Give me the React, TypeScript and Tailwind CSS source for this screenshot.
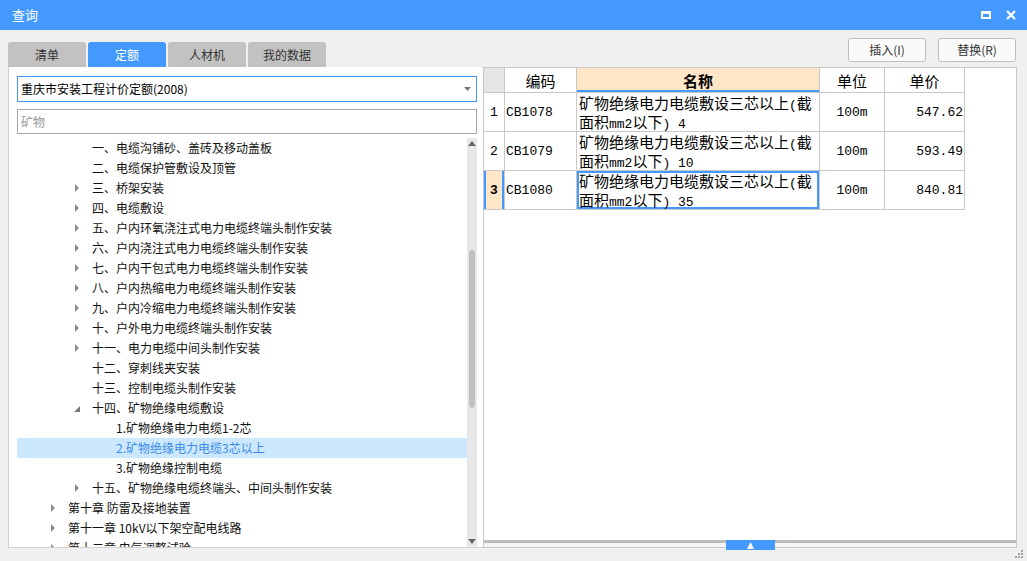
import React from "react";

type Node = { t: string; lv: 1 | 2 | 3; a?: "r" | "d"; sel?: boolean };

const tree: Node[] = [
  { t: "一、电缆沟铺砂、盖砖及移动盖板", lv: 2 },
  { t: "二、电缆保护管敷设及顶管", lv: 2 },
  { t: "三、桥架安装", lv: 2, a: "r" },
  { t: "四、电缆敷设", lv: 2, a: "r" },
  { t: "五、户内环氧浇注式电力电缆终端头制作安装", lv: 2, a: "r" },
  { t: "六、户内浇注式电力电缆终端头制作安装", lv: 2, a: "r" },
  { t: "七、户内干包式电力电缆终端头制作安装", lv: 2, a: "r" },
  { t: "八、户内热缩电力电缆终端头制作安装", lv: 2, a: "r" },
  { t: "九、户内冷缩电力电缆终端头制作安装", lv: 2, a: "r" },
  { t: "十、户外电力电缆终端头制作安装", lv: 2, a: "r" },
  { t: "十一、电力电缆中间头制作安装", lv: 2, a: "r" },
  { t: "十二、穿刺线夹安装", lv: 2 },
  { t: "十三、控制电缆头制作安装", lv: 2 },
  { t: "十四、矿物绝缘电缆敷设", lv: 2, a: "d" },
  { t: "1.矿物绝缘电力电缆1-2芯", lv: 3 },
  { t: "2.矿物绝缘电力电缆3芯以上", lv: 3, sel: true },
  { t: "3.矿物绝缘控制电缆", lv: 3 },
  { t: "十五、矿物绝缘电缆终端头、中间头制作安装", lv: 2, a: "r" },
  { t: "第十章 防雷及接地装置", lv: 1, a: "r" },
  { t: "第十一章 10kV以下架空配电线路", lv: 1, a: "r" },
  { t: "第十二章 电气调整试验", lv: 1, a: "r" },
];

const indent: Record<number, string> = { 1: "pl-[33px]", 2: "pl-[57px]", 3: "pl-[81px]" };

function M({ s }: { s: string }) {
  const parts = s.split(/([\u0000-\u00ff]+)/).filter((p) => p.length > 0);
  return (
    <>
      {parts.map((p, i) =>
        /^[\u0000-\u00ff]+$/.test(p) ? (
          <span key={i} className="font-['Liberation_Mono',monospace] text-[13px] whitespace-pre">
            {p}
          </span>
        ) : (
          <span key={i}>{p}</span>
        )
      )}
    </>
  );
}

const rows = [
  { n: "1", code: "CB1078", l2: "面积mm2以下) 4", price: "547.62" },
  { n: "2", code: "CB1079", l2: "面积mm2以下) 10", price: "593.49" },
  { n: "3", code: "CB1080", l2: "面积mm2以下) 35", price: "840.81", sel: true },
];

export default function App() {
  return (
    <div className="relative w-[1027px] h-[561px] bg-[#f0f0f0] flex flex-col overflow-hidden font-['Noto_Sans_CJK_SC',sans-serif]">
      {/* title bar */}
      <div className="h-[30px] bg-[#4499ff] flex items-center pl-[12px] pr-[11px] text-white text-[13px]">
        <span>查询</span>
        <div className="ml-auto flex items-center gap-[15px]">
          <div className="w-[10px] h-[8px] border-[2px] border-t-[3px] border-white" />
          <svg width="10" height="10" viewBox="0 0 10 10">
            <path d="M1 1 L9 9 M9 1 L1 9" stroke="white" strokeWidth="2.2" />
          </svg>
        </div>
      </div>

      {/* tabs & buttons */}
      <div className="h-[37px] flex pl-[8px] pr-[11px]">
        <div className="self-end flex gap-[2px] text-[12px]">
          {["清单", "定额", "人材机", "我的数据"].map((t) => (
            <div
              key={t}
              className={
                t === "定额"
                  ? "w-[78px] h-[25px] rounded-t-[3px] bg-[#4499ff] text-white flex items-center justify-center"
                  : "w-[78px] h-[25px] rounded-t-[3px] bg-[#c2c2c2] text-[#333] flex items-center justify-center"
              }
            >
              {t}
            </div>
          ))}
        </div>
        <div className="ml-auto mt-[8px] flex gap-[12px] self-start text-[12px] text-[#333]">
          <div className="w-[78px] h-[24px] rounded-[3px] border border-[#bdbdbd] bg-[#fafafa] flex items-center justify-center">
            插入(I)
          </div>
          <div className="w-[78px] h-[24px] rounded-[3px] border border-[#bdbdbd] bg-[#fafafa] flex items-center justify-center">
            替换(R)
          </div>
        </div>
      </div>

      {/* main */}
      <div className="h-[481px] flex pl-[8px]">
        {/* left panel */}
        <div className="w-[475px] h-full bg-white border-l border-b border-[#d0d0d0] pl-[8px] pt-[9px] flex flex-col">
          <div className="w-[460px] h-[26px] border border-[#4499ff] flex items-center pl-[3px] pr-[5px] text-[12px] text-black">
            <span>重庆市安装工程计价定额(2008)</span>
            <svg className="ml-auto" width="7" height="4" viewBox="0 0 7 4">
              <polygon points="0,0 7,0 3.5,4" fill="#777" />
            </svg>
          </div>
          <div className="mt-[7px] w-[460px] h-[25px] border border-[#a9a9a9] flex items-center pl-[3px] text-[12px] text-[#999]">
            矿物
          </div>
          <div className="mt-[4px] flex flex-1 overflow-hidden">
            <div className="w-[450px] overflow-hidden">
              {tree.map((n, i) => (
                <div
                  key={i}
                  className={
                    "h-[20px] flex items-center text-[12px] whitespace-nowrap " +
                    indent[n.lv] +
                    (n.sel ? " bg-[#cce8ff] text-[#3b8de8]" : " text-[#111]")
                  }
                >
                  <div className="w-[18px] h-[20px] flex items-center">
                    {n.a === "r" && (
                      <svg width="5" height="8" viewBox="0 0 5 8" className="ml-[1px]">
                        <polygon points="0,0 4,4 0,8" fill="#8c8c8c" />
                      </svg>
                    )}
                    {n.a === "d" && (
                      <svg width="7" height="7" viewBox="0 0 7 7" className="mt-[3px]">
                        <polygon points="6,0 6,6 0,6" fill="#7a7a7a" />
                      </svg>
                    )}
                  </div>
                  <span>{n.t}</span>
                </div>
              ))}
            </div>
            <div className="w-[10px] h-full bg-[#e8e8e8] relative flex flex-col items-center">
              <svg width="8" height="5" viewBox="0 0 8 5" className="mt-[3px]">
                <polygon points="0,5 8,5 4,0" fill="#666" />
              </svg>
              <div className="mt-[104px] w-[6px] h-[158px] rounded-[3px] bg-[#c2c2c2]" />
              <svg width="8" height="5" viewBox="0 0 8 5" className="mt-auto mb-[3px]">
                <polygon points="0,0 8,0 4,5" fill="#666" />
              </svg>
            </div>
          </div>
        </div>

        {/* right panel */}
        <div className="w-[534px] h-full bg-white border border-[#c8c8c8] flex flex-col">
          <div className="flex-1 text-[15px] text-black leading-none">
            {/* header */}
            <div className="flex h-[25px]">
              <div className="w-[21px] h-full bg-[#e6e6e6] border-r border-b border-[#c8c8c8]" />
              <div className="w-[72px] h-full border-r border-b border-[#c8c8c8] flex items-center justify-center">编码</div>
              <div className="w-[243px] h-full border-r border-b border-[#c8c8c8] bg-[#ffe6c7] font-bold flex items-center justify-center shadow-[inset_0_-2px_0_#4499ff]">
                名称
              </div>
              <div className="w-[65px] h-full border-r border-b border-[#c8c8c8] flex items-center justify-center">单位</div>
              <div className="w-[80px] h-full border-r border-b border-[#c8c8c8] flex items-center justify-center">单价</div>
            </div>
            {rows.map((r) => (
              <div key={r.n} className="flex h-[39px]">
                <div
                  className={
                    r.sel
                      ? "w-[21px] h-full border-r border-b border-[#c8c8c8] bg-[#ffe6c7] font-bold flex items-center justify-center shadow-[inset_2px_0_0_#4499ff,inset_-2px_0_0_#4499ff]"
                      : "w-[21px] h-full border-r border-b border-[#c8c8c8] flex items-center justify-center"
                  }
                >
                  <M s={r.n} />
                </div>
                <div className="w-[72px] h-full border-r border-b border-[#c8c8c8] flex items-center pl-[1px]">
                  <M s={r.code} />
                </div>
                <div
                  className={
                    "w-[243px] h-full border-r border-b border-[#c8c8c8] pl-[2px] whitespace-nowrap overflow-hidden" +
                    (r.sel ? " shadow-[inset_0_0_0_2px_#4499ff]" : "")
                  }
                >
                  <div className="h-[19px] leading-[19px]">
                    <M s="矿物绝缘电力电缆敷设三芯以上(截" />
                  </div>
                  <div className="h-[19px] leading-[19px]">
                    <M s={r.l2} />
                  </div>
                </div>
                <div className="w-[65px] h-full border-r border-b border-[#c8c8c8] flex items-center justify-center">
                  <M s="100m" />
                </div>
                <div className="w-[80px] h-full border-r border-b border-[#c8c8c8] flex items-center justify-end pr-[1px]">
                  <M s={r.price} />
                </div>
              </div>
            ))}
          </div>
          {/* splitter */}
          <div className="h-[7px] relative border-t-[3px] border-[#bdbdbd] bg-[#f5f5f5] flex justify-center">
            <div className="absolute -top-[3px] w-[49px] h-[10px] bg-[#4499ff] flex items-center justify-center">
              <svg width="7" height="7" viewBox="0 0 7 7">
                <polygon points="3.5,0 7,7 0,7" fill="white" />
              </svg>
            </div>
          </div>
        </div>
      </div>

      {/* resize grip */}
      <svg className="absolute right-[4px] bottom-[3px]" width="8" height="8" viewBox="0 0 8 8">
        <rect x="6" y="0" width="2" height="2" fill="#a0a0a0" />
        <rect x="3" y="3" width="2" height="2" fill="#a0a0a0" />
        <rect x="6" y="3" width="2" height="2" fill="#a0a0a0" />
        <rect x="0" y="6" width="2" height="2" fill="#a0a0a0" />
        <rect x="3" y="6" width="2" height="2" fill="#a0a0a0" />
        <rect x="6" y="6" width="2" height="2" fill="#a0a0a0" />
      </svg>
    </div>
  );
}
